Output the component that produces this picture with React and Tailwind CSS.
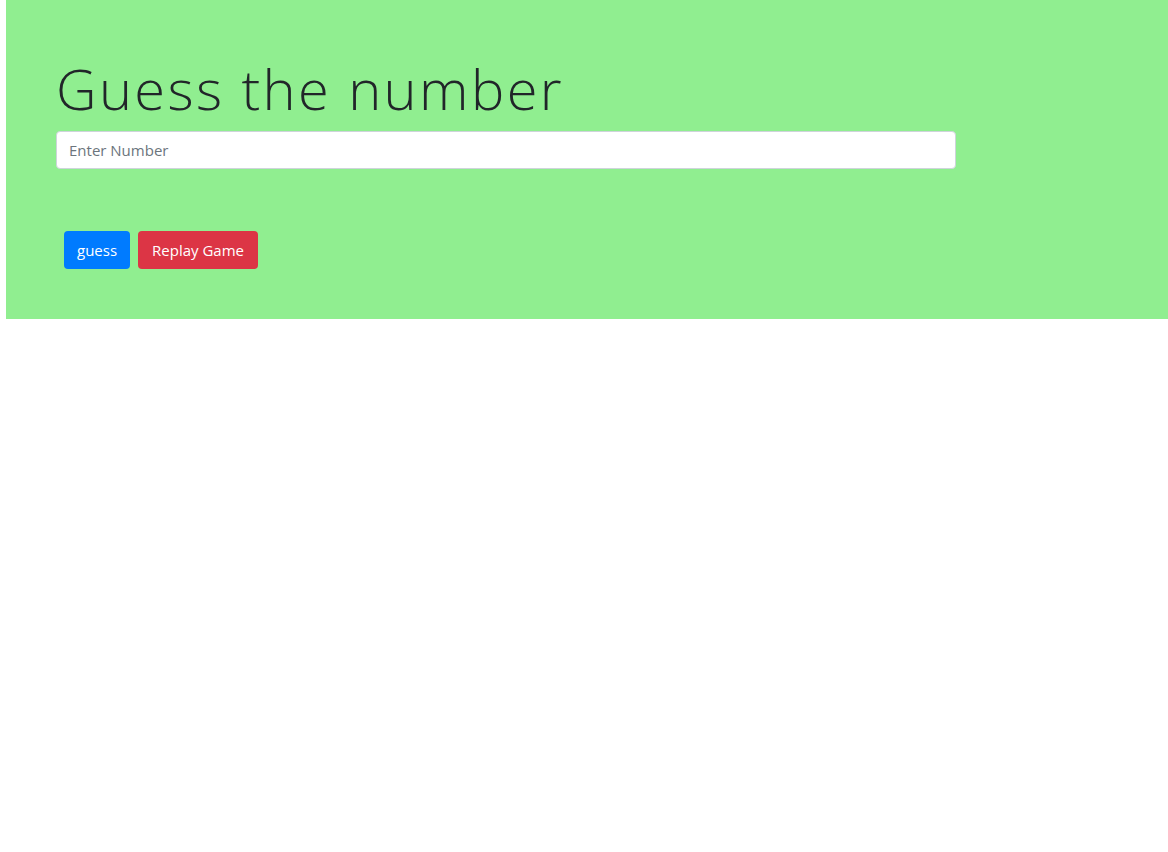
export default function App() {
  return (
    <div className="min-h-[852px] bg-white" style={{ fontFamily: '"Open Sans", "Noto Sans", sans-serif' }}>
      <div className="ml-[6px] h-[319px] bg-[#90ee90] pl-[50px] pt-[55px]">
        <h1 className="m-0 mb-[9px] text-[56px] font-[350] leading-[1.2] tracking-[2.4px] text-[#212529]">
          Guess the number
        </h1>
        <input
          type="text"
          placeholder="Enter Number"
          className="box-border block h-[38px] w-[900px] rounded-[4px] border border-[#ced4da] bg-white px-3 text-[15px] text-[#495057] placeholder:text-[#6c757d] outline-none"
        />
        <div className="mt-[62px] flex gap-2 pl-2">
          <button className="flex h-[38px] items-center rounded-[4px] bg-[#007bff] px-[13px] text-[15px] text-white">
            guess
          </button>
          <button className="flex h-[38px] items-center rounded-[4px] bg-[#dc3545] px-[14px] text-[15px] text-white">
            Replay Game
          </button>
        </div>
      </div>
    </div>
  );
}
